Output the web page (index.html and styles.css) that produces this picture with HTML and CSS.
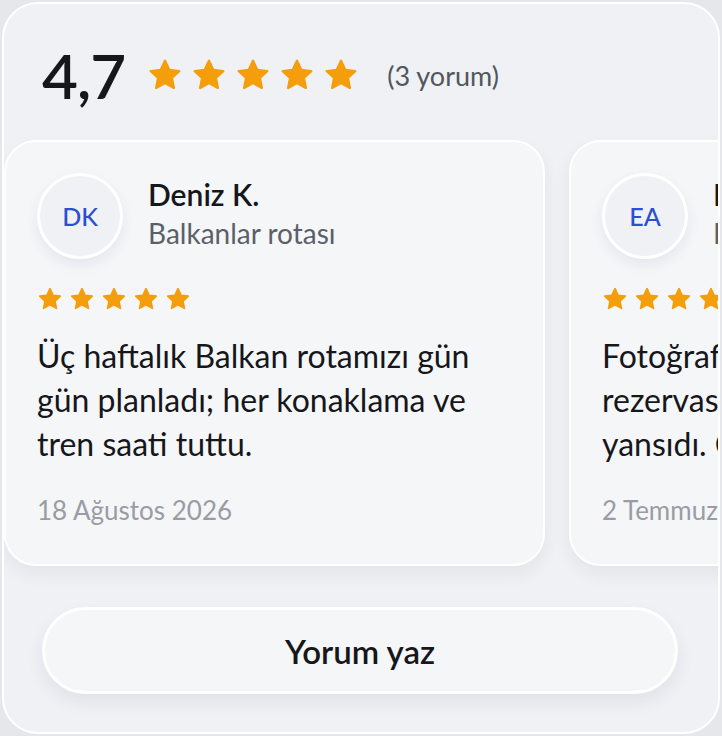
FILE: index.html
```html
<!DOCTYPE html>
<html lang="tr">
<head>
<meta charset="UTF-8">
<title>Yorumlar</title>
<meta name="viewport" content="width=device-width, initial-scale=1">
<link rel="stylesheet" href="styles.css">
</head>
<body>
  <svg width="0" height="0" style="position:absolute">
    <symbol id="star" viewBox="0 0 24 24">
      <polygon points="12 2.5 14.9 8.6 21.5 9.4 16.6 14 17.9 20.6 12 17.3 6.1 20.6 7.4 14 2.5 9.4 9.1 8.6"
        fill="currentColor" stroke="currentColor" stroke-width="1.6" stroke-linejoin="round"/>
    </symbol>
  </svg>

  <section class="panel">
    <div class="summary">
      <span class="score">4,7</span>
      <div class="stars big">
        <svg><use href="#star"/></svg><svg><use href="#star"/></svg><svg><use href="#star"/></svg><svg><use href="#star"/></svg><svg><use href="#star"/></svg>
      </div>
      <span class="count">(3 yorum)</span>
    </div>

    <div class="track">
      <article class="review">
        <div class="who">
          <div class="avatar">DK</div>
          <div>
            <div class="name">Deniz K.</div>
            <div class="trip">Balkanlar rotası</div>
          </div>
        </div>
        <div class="stars small">
          <svg><use href="#star"/></svg><svg><use href="#star"/></svg><svg><use href="#star"/></svg><svg><use href="#star"/></svg><svg><use href="#star"/></svg>
        </div>
        <p class="text">Üç haftalık Balkan rotamızı gün gün planladı; her konaklama ve tren saati tuttu.</p>
        <div class="date">18 Ağustos 2026</div>
      </article>

      <article class="review">
        <div class="who">
          <div class="avatar">EA</div>
          <div>
            <div class="name">Ece A.</div>
            <div class="trip">Bali ve Lombok</div>
          </div>
        </div>
        <div class="stars small">
          <svg><use href="#star"/></svg><svg><use href="#star"/></svg><svg><use href="#star"/></svg><svg><use href="#star"/></svg><svg><use href="#star"/></svg>
        </div>
        <p class="text">Fotoğraflardaki otel ve tekne rezervasyonları aynen gerçeğe yansıdı. Çok memnun kaldık.</p>
        <div class="date">2 Temmuz 2026</div>
      </article>

      <article class="review">
        <div class="who">
          <div class="avatar">MS</div>
          <div>
            <div class="name">Mert S.</div>
            <div class="trip">Japonya turu</div>
          </div>
        </div>
        <div class="stars small">
          <svg><use href="#star"/></svg><svg><use href="#star"/></svg><svg><use href="#star"/></svg><svg><use href="#star"/></svg><svg><use href="#star"/></svg>
        </div>
        <p class="text">Her ayrıntı düşünülmüştü.</p>
        <div class="date">14 Haziran 2026</div>
      </article>
    </div>

    <div class="actions">
      <button class="write">Yorum yaz</button>
    </div>
  </section>
</body>
</html>
```

FILE: styles.css
```css
:root{
  --panel:#eff1f5;
  --card:#f5f6f8;
  --ink:#16171b;
  --muted:#5b5f69;
  --faint:#9a9ca4;
  --star:#f59e0b;
  --blue:#2b4fd0;
}
*{ box-sizing:border-box; }
body{
  margin:0;
  background:#e5e7eb;
  font-family:"Lato", "Noto Sans", sans-serif;
  color:var(--ink);
}
.panel{
  margin:2px;
  height:732px;
  border:2px solid #fff;
  border-radius:36px;
  background:var(--panel);
  overflow:hidden;
}
.summary{
  display:flex; align-items:center;
  height:64px;
  margin:39px 40px 0 38px;
}
.score{ font-size:62px; font-weight:600; letter-spacing:-1px; line-height:1; }
.stars{ display:flex; color:var(--star); }
.stars svg{ display:block; }
.stars.big{ gap:8px; margin-left:22px; }
.stars.big svg{ width:36px; height:36px; }
.count{ margin-left:28px; font-size:27px; color:#52565f; }

.track{
  display:flex; gap:24px;
  margin-top:33px;
  padding-bottom:10px;
}
.review{
  flex:0 0 541px;
  height:426px;
  border:2px solid #fff;
  border-radius:32px;
  background:var(--card);
  padding:31px 31px 0;
  box-shadow:0 8px 18px rgba(30,35,50,.06);
}
.who{ display:flex; align-items:center; gap:25px; }
.avatar{
  width:86px; height:86px; border-radius:50%;
  border:3px solid #fff;
  background:var(--panel);
  display:flex; align-items:center; justify-content:center;
  font-size:25px; font-weight:500; color:var(--blue);
  box-shadow:0 6px 14px rgba(30,35,50,.07);
}
.name{ font-size:30px; font-weight:600; line-height:34px; margin-top:-2px; }
.trip{ font-size:28px; color:var(--muted); line-height:40px; margin-top:2px; }
.stars.small{ gap:6px; margin-top:27px; }
.stars.small svg{ width:26px; height:26px; }
.text{ margin:22px 0 0; font-size:32px; line-height:44px; }
.date{ margin-top:28px; font-size:26px; line-height:32px; color:var(--faint); }

.actions{ padding:31px 40px 0 38px; }
.write{
  display:block; width:100%; height:87px;
  border:3px solid #fff; border-radius:44px;
  background:var(--card);
  font-family:inherit; font-size:33px; font-weight:600; color:var(--ink);
  box-shadow:0 8px 18px rgba(30,35,50,.07);
}
```
